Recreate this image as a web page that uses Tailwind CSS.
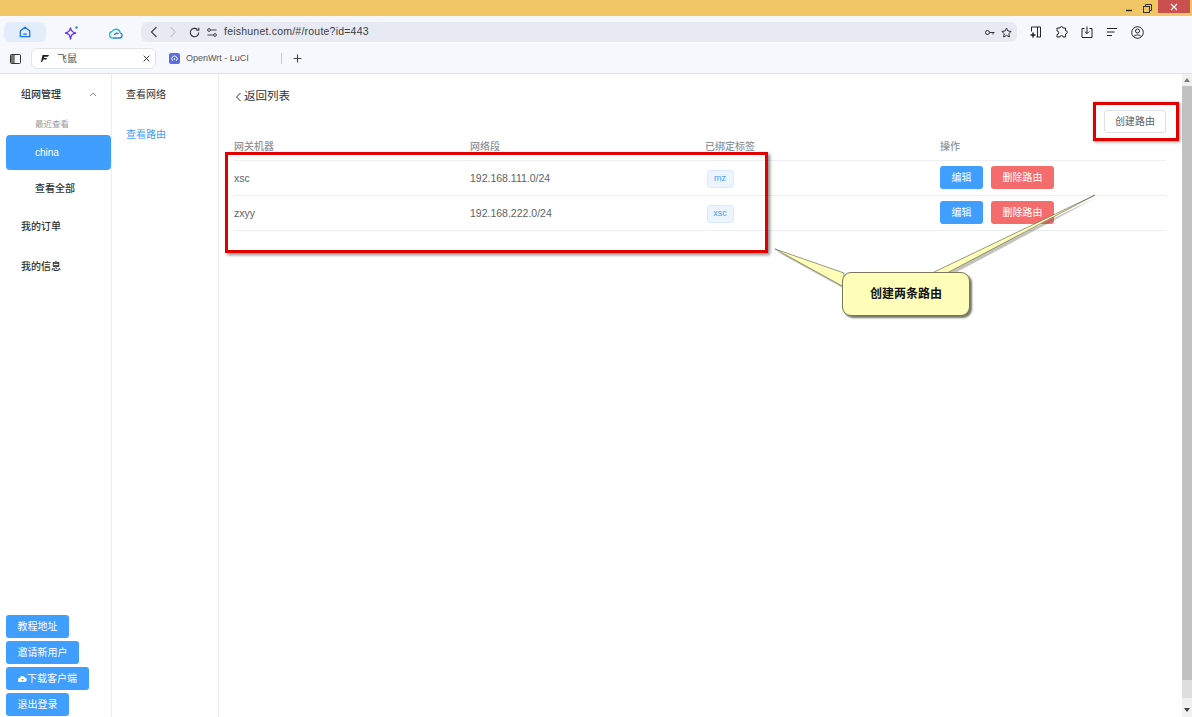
<!DOCTYPE html>
<html lang="en">
<head>
    <meta charset="UTF-8">
    <title>飞鼠</title>
    <script src="https://cdn.jsdelivr.net/npm/@tailwindcss/browser@4"></script>
</head>
<body class="w-[1192px] h-[717px] overflow-hidden bg-white text-[#303133] font-['Liberation_Sans','Noto_Sans_CJK_SC',sans-serif] flex flex-col relative">
    <!-- window title bar -->
    <div class="h-4 bg-[#efc663] flex justify-end items-stretch shrink-0">
        <div class="w-[22px] flex items-center justify-center">
            <svg width="8" height="8" viewBox="0 0 8 8"><path d="M1 6.500h6" stroke="#222" stroke-width="1.400"/></svg>
        </div>
        <div class="w-[15px] flex items-center justify-center mr-[3px]">
            <svg width="9" height="9" viewBox="0 0 9 9" fill="none" stroke="#333"><rect x="0.500" y="2.500" width="6" height="6"/><path d="M2.500 2.500v-2h6v6h-2"/></svg>
        </div>
        <div class="w-[32px] bg-[#c9504f] flex items-center justify-center mr-[2px] mb-[3px]">
            <svg width="8" height="8" viewBox="0 0 8 8"><path d="M1 1l6 6M7 1l-6 6" stroke="#fff" stroke-width="1.100"/></svg>
        </div>
    </div>

    <!-- browser toolbar -->
    <div class="h-8 bg-[#f6f8fd] flex items-center shrink-0 pl-1">
        <div class="w-[42px] h-5 bg-[#e3ecfa] rounded-md flex items-center justify-center">
            <svg width="12" height="12" viewBox="0 0 14 14" fill="none" stroke="#1a73e8" stroke-width="1.500"><path d="M1.500 5.800 7 1.500l5.500 4.300v6.700h-11z" stroke-linejoin="round"/><path d="M5 9.500h4"/></svg>
        </div>
        <div class="w-[44px] ml-[3px] flex justify-center">
            <svg width="15" height="15" viewBox="0 0 15 15" fill="none"><path d="M6.500 3C7 6 8 7 11.500 8 8 9 7 10 6.500 14 6 10 5 9 1.500 8 5 7 6 6 6.500 3z" stroke="#6a3de8" stroke-width="1.500" stroke-linejoin="round"/><circle cx="12.500" cy="2.500" r="1.200" fill="#3a7de8"/></svg>
        </div>
        <div class="w-[44px] ml-[1px] flex justify-center">
            <svg width="14" height="13" viewBox="0 0 14 13" fill="none" stroke-width="1.400"><path d="M3.800 12h6.700a2.600 2.600 0 0 0 .7-5.100" stroke="#2b7de9"/><path d="M11.200 6.900A4.400 4.400 0 0 0 3 5.500 3.300 3.300 0 0 0 3.800 12" stroke="#21c1c8"/><path d="M5.500 9.200a2.200 2.200 0 0 1 3.800-1.200" stroke="#2b7de9"/></svg>
        </div>
        <div class="w-[876px] ml-[3px] h-5 bg-[#e7eaf2] rounded-md flex items-center text-[#3c4043]">
            <svg class="ml-[9px]" width="8" height="12" viewBox="0 0 8 12" fill="none" stroke="#444" stroke-width="1.200"><path d="M6.500 1 1.500 6l5 5"/></svg>
            <svg class="ml-[11px]" width="8" height="12" viewBox="0 0 8 12" fill="none" stroke="#c4c7cd" stroke-width="1.200"><path d="m1.500 1 5 5-5 5"/></svg>
            <svg class="ml-[12px]" width="11" height="11" viewBox="0 0 11 11" fill="none" stroke="#333" stroke-width="1.100"><path d="M9.700 5.500a4.200 4.200 0 1 1-1.300-3"/><path d="M9.800 0.800v2.500H7.300"/></svg>
            <svg class="ml-[7px]" width="10" height="9" viewBox="0 0 10 9" fill="none" stroke="#444"><path d="M3.500 2H9.500M0.500 7h6"/><circle cx="2" cy="2" r="1.400"/><circle cx="8" cy="7" r="1.400"/></svg>
            <span class="ml-[7px] text-[10.500px] tracking-[0.22px]">feishunet.com/#/route?id=443</span>
            <svg class="ml-auto" width="10" height="7" viewBox="0 0 10 7" fill="none" stroke="#333"><circle cx="2.500" cy="3.500" r="2"/><path d="M4.500 3.500h5M8 3.500v2"/></svg>
            <svg class="ml-[6px] mr-[5px]" width="11" height="11" viewBox="0 0 11 11" fill="none" stroke="#333"><path d="m5.500 1 1.400 3 3.300.4-2.400 2.300.6 3.300-2.900-1.600L2.600 10l.6-3.300L.8 4.400l3.300-.4z" stroke-linejoin="round"/></svg>
        </div>
        <div class="flex items-center ml-[13px] gap-[13px]">
            <svg width="12" height="12" viewBox="0 0 12 12" fill="none" stroke="#222"><path d="M1.500 5.500v-4.500h9v10h-4"/><path d="M7.500 1v10"/><path d="M0.500 9h5M3 6.500v5" stroke-width="1.500"/></svg>
            <svg width="13" height="13" viewBox="0 0 13 13" fill="none" stroke="#222"><path d="M5 2a1.500 1.500 0 0 1 3 0h2.500v2.500a1.500 1.500 0 0 1 0 3.500v3H8a1.500 1.500 0 0 0-3 0H2V8.500a1.500 1.500 0 0 0 0-3.500V2z" stroke-linejoin="round"/></svg>
            <svg width="12" height="12" viewBox="0 0 12 12" fill="none" stroke="#222"><path d="M3.500 2.500H1v9h10v-9H8.500"/><path d="M6 0.500v7M3.800 5.500 6 7.700l2.200-2.200"/></svg>
            <svg width="12" height="10" viewBox="0 0 12 10" fill="none" stroke="#222"><path d="M1 1.500h10M1 5h7.500M1 8.500h5"/></svg>
            <svg width="13" height="13" viewBox="0 0 13 13" fill="none" stroke="#222"><circle cx="6.500" cy="6.500" r="5.800"/><circle cx="6.500" cy="5" r="2"/><path d="M2.800 10.500c1-2 6.400-2 7.400 0"/></svg>
        </div>
    </div>

    <!-- tab strip -->
    <div class="h-[26px] bg-[#f6f8fd] border-b border-[#dfe1e5] shrink-0 text-[10px]">
        <div class="h-[21px] flex items-center">
            <svg class="ml-[10px]" width="11" height="10" viewBox="0 0 11 10" fill="none" stroke="#333"><rect x="0.500" y="0.500" width="10" height="9" rx="1"/><path d="M4 0.500v9"/><rect x="1" y="1" width="3" height="8" fill="#777" stroke="none"/></svg>
            <div class="ml-[10px] w-[125px] h-[21px] bg-white border border-[#e2e4ea] rounded-md flex items-center">
                <svg class="ml-[9px]" width="8" height="7" viewBox="0 0 8 7" fill="#222"><path d="M1.500 0H8L7 1.700H3.500L3 3h3L5.500 4.500H2.500L1 7H0z"/></svg>
                <span class="ml-2 text-[#555]">飞鼠</span>
                <svg class="ml-auto mr-[5px]" width="7" height="7" viewBox="0 0 7 7"><path d="m.7.700 5.600 5.600M6.300.700.7 6.300" stroke="#333"/></svg>
            </div>
            <div class="ml-[13px] w-[11px] h-[11px] bg-[#5b6ee1] rounded-[2px] flex items-center justify-center">
                <svg width="7" height="7" viewBox="0 0 7 7" fill="none" stroke="#fff"><path d="M1.800 5.800a2.700 2.700 0 1 1 3.400 0"/><path d="M3.500 3v2"/></svg>
            </div>
            <span class="ml-[6px] text-[9px] text-[#555]">OpenWrt - LuCI</span>
            <div class="ml-[32px] w-px h-[11px] bg-[#c8cad0]"></div>
            <svg class="ml-[11px]" width="9" height="9" viewBox="0 0 9 9"><path d="M4.500 .5v8M.5 4.500h8" stroke="#444" stroke-width="1.100"/></svg>
        </div>
    </div>

    <!-- page -->
    <div class="flex-1 flex min-h-0">
        <aside class="w-[112px] shrink-0 border-r-[1.500px] border-[#ecedf0] flex flex-col text-[10px] font-medium text-[#303133]">
            <div class="h-[40px] pl-[21px] pr-[14px] flex items-center justify-between">
                <span>组网管理</span>
                <svg width="8" height="5" viewBox="0 0 8 5" fill="none" stroke="#777" stroke-width="0.800"><path d="m1 4 3-3 3 3"/></svg>
            </div>
            <div class="h-[20px] pl-[35px] flex items-center text-[8.500px] text-[#999] font-normal">最近查看</div>
            <div class="mt-[1px] ml-[6px] w-[105px] h-[35px] bg-[#409eff] rounded-[4px] pl-[29px] flex items-center text-white font-normal">china</div>
            <div class="h-[36px] pl-[35px] flex items-center">查看全部</div>
            <div class="h-[40px] pl-[21px] flex items-center">我的订单</div>
            <div class="h-[40px] pl-[21px] flex items-center">我的信息</div>
            <div class="mt-auto ml-[6px] mb-[1px] flex flex-col items-start gap-[3px] text-white font-normal">
                <div class="h-[23px] w-[63px] bg-[#409eff] rounded-[3px] flex items-center justify-center">教程地址</div>
                <div class="h-[23px] w-[73px] bg-[#409eff] rounded-[3px] flex items-center justify-center">邀请新用户</div>
                <div class="h-[23px] w-[83px] bg-[#409eff] rounded-[3px] flex items-center justify-center">
                    <svg width="9" height="7" viewBox="0 0 9 7" fill="#fff"><path d="M2 7a2 2 0 0 1-.3-4A2.900 2.900 0 0 1 7 2.500 2.300 2.300 0 0 1 7 7z"/><path d="M4.500 5.800 3 4h3z" fill="#409eff"/></svg>
                    <span>下载客户端</span>
                </div>
                <div class="h-[23px] w-[63px] bg-[#409eff] rounded-[3px] flex items-center justify-center">退出登录</div>
            </div>
        </aside>

        <nav class="w-[107px] shrink-0 border-r-[1.500px] border-[#ecedf0] text-[10px] text-[#303133] pl-[14px]">
            <div class="h-[40px] flex items-center">查看网络</div>
            <div class="h-[40px] flex items-center text-[#409eff]">查看路由</div>
        </nav>

        <main class="flex-1 min-w-0 pl-[15px] pr-[16px]">
            <div class="h-[46px] flex items-center text-[11.500px] text-[#303133]">
                <svg class="ml-[1px] mr-[2px]" width="7" height="10" viewBox="0 0 7 10" fill="none" stroke="#333"><path d="M5.500 1 1.500 5l4 4"/></svg>
                <span>返回列表</span>
            </div>
            <div class="flex justify-end -mt-[10px] h-[23px]">
                <div class="w-[62px] h-[23px] border border-[#dcdfe6] rounded-[3px] flex items-center justify-center text-[10px] text-[#606266]">创建路由</div>
            </div>
            <table class="w-[932px] text-[10.500px] text-[#606266] table-fixed border-collapse">
                <thead class="text-[#909399] text-[10px]">
                    <tr class="h-[27px] border-b border-[#ebeef5] text-left">
                        <th class="w-[236px] font-medium pt-[1px]">网关机器</th>
                        <th class="w-[235px] font-medium pt-[1px]">网络段</th>
                        <th class="w-[235px] font-medium pt-[1px]">已绑定标签</th>
                        <th class="font-medium pt-[1px]">操作</th>
                    </tr>
                </thead>
                <tbody>
                    <tr class="h-[35px] border-b border-[#ebeef5]">
                        <td class="pt-[2px]">xsc</td>
                        <td class="pt-[2px]">192.168.111.0/24</td>
                        <td class="pt-[2px] pl-[1.500px]"><span class="inline-flex align-middle items-center justify-center w-[27px] h-[18px] bg-[#ecf5ff] border border-[#d9ecff] rounded-[3px] text-[#409eff] text-[9px]">mz</span></td>
                        <td>
                            <div class="flex gap-2 text-white text-[10px]">
                                <span class="w-[43px] h-[23px] bg-[#409eff] rounded-[3px] flex items-center justify-center">编辑</span>
                                <span class="w-[63px] h-[23px] bg-[#f56c6c] rounded-[3px] flex items-center justify-center">删除路由</span>
                            </div>
                        </td>
                    </tr>
                    <tr class="h-[35px] border-b border-[#ebeef5]">
                        <td class="pt-[2px]">zxyy</td>
                        <td class="pt-[2px]">192.168.222.0/24</td>
                        <td class="pt-[2px] pl-[1.500px]"><span class="inline-flex align-middle items-center justify-center w-[27px] h-[18px] bg-[#ecf5ff] border border-[#d9ecff] rounded-[3px] text-[#409eff] text-[9px]">xsc</span></td>
                        <td>
                            <div class="flex gap-2 text-white text-[10px]">
                                <span class="w-[43px] h-[23px] bg-[#409eff] rounded-[3px] flex items-center justify-center">编辑</span>
                                <span class="w-[63px] h-[23px] bg-[#f56c6c] rounded-[3px] flex items-center justify-center">删除路由</span>
                            </div>
                        </td>
                    </tr>
                </tbody>
            </table>
        </main>

        <!-- page scrollbar -->
        <div class="w-[10px] shrink-0 bg-[#f1f1f1] flex flex-col items-center">
            <div class="h-[12px] flex items-center justify-center">
                <svg width="6" height="4" viewBox="0 0 6 4" fill="#777"><path d="M3 0 6 4H0z"/></svg>
            </div>
            <div class="w-full h-[594px] bg-[#c1c1c1]"></div>
            <div class="w-full h-[18px] bg-[#dedede]"></div>
            <div class="mt-auto h-[14px] flex items-center justify-center">
                <svg width="6" height="4" viewBox="0 0 6 4" fill="#444"><path d="M0 0h6L3 4z"/></svg>
            </div>
        </div>
    </div>

    <!-- screenshot annotations -->
    <div class="absolute left-[225px] top-[152px] w-[543px] h-[101px] border-[3px] border-[#e00000] shadow-[2px_2px_3px_rgba(0,0,0,0.45)]"></div>
    <div class="absolute left-[1093px] top-[102px] w-[86px] h-[39px] border-[3px] border-[#e00000] shadow-[1px_1px_3px_rgba(0,0,0,0.45)]"></div>
    <svg class="absolute left-0 top-0 pointer-events-none" width="1192" height="717" viewBox="0 0 1192 717">
        <path d="M775 250 844 288V274ZM1095 196 934 274H949Z" fill="#55553f" opacity="0.35" transform="translate(1.500 1.500)"/>
        <path d="M775 249 844 287V273ZM1095 195 932 273H947Z" fill="#ffffb9" stroke="#6e6e58" stroke-width="0.700" stroke-linejoin="round"/>
    </svg>
    <div class="absolute left-[842px] top-[272px] w-[128px] h-[44px] bg-[#ffffb9] border border-[#77775c] rounded-[9px] shadow-[2px_2px_2px_rgba(60,60,40,0.7)] flex items-center justify-center text-[12px] font-bold text-[#111] font-['Liberation_Serif','Noto_Sans_CJK_SC',serif]">创建两条路由</div>
</body>
</html>
